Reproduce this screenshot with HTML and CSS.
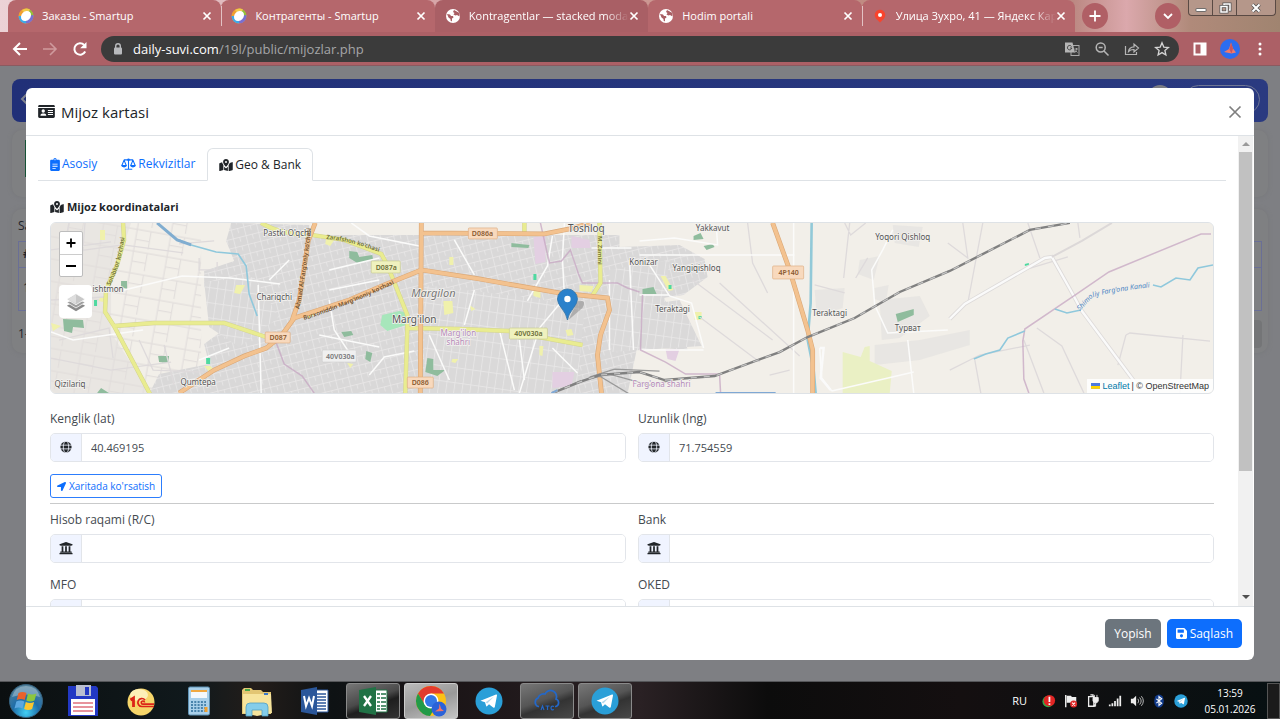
FILE: index.html
```html
<!DOCTYPE html>
<html lang="uz">
<head>
<meta charset="utf-8">
<title>Mijoz kartasi</title>
<link rel="stylesheet" href="styles.css">
</head>
<body>
<svg class="defs" aria-hidden="true">
  <defs>
    <symbol id="i-x" viewBox="0 0 10 10"><path d="M1.500 1.500l7 7M8.500 1.500l-7 7" fill="none" stroke="currentColor" stroke-width="1.700"/></symbol>
    <symbol id="i-smartup" viewBox="0 0 16 16">
      <circle cx="8" cy="8" r="7.500" fill="#f0a030"/>
      <path d="M8 .5A7.500 7.500 0 0 1 15.500 8L8 8z" fill="#8fc23c"/>
      <path d="M15.500 7A7.500 7.500 0 0 1 8 15.500L8 8z" fill="#7a6fd0"/>
      <path d="M8 15.500A7.500 7.500 0 0 1 .5 8L8 8z" fill="#3fa9e8"/>
      <path d="M4 2A7.500 7.500 0 0 1 12 1.500L8 8z" fill="#f3c94a"/>
      <ellipse cx="8" cy="8" rx="5.500" ry="4.500" transform="rotate(-45 8 8)" fill="#fff"/>
    </symbol>
    <symbol id="i-globe-fav" viewBox="0 0 16 16">
      <circle cx="8" cy="8" r="7" fill="#fff"/>
      <path d="M2 6l3 .5 1 1.500h2l.5 1.500-1.500 1v3l-1.500-1V11L3.500 9.500zM9 2l-1 2 1.500 1-1 1.500 2 1 1.500-.5 2.500 1.500V5z" fill="#a95f64"/>
    </symbol>
    <symbol id="i-book" viewBox="0 0 384 512"><path fill="currentColor" d="M336 64h-80a64 64 0 0 0-128 0H48C21 64 0 85 0 112v352c0 27 21 48 48 48h288c27 0 48-21 48-48V112c0-27-21-48-48-48zM192 40a24 24 0 1 1 0 48 24 24 0 0 1 0-48zM90 230h204v30H90zm0 80h204v30H90zm0 80h130v30H90z" fill-rule="evenodd"/></symbol>
    <symbol id="i-scale" viewBox="0 0 640 512"><path fill="none" stroke="currentColor" stroke-width="46" d="M120 80h400M320 40v425M160 480h320M130 90L40 310M130 90l90 220M510 90l-90 220M510 90l90 220"/><path fill="currentColor" d="M0 300h260q-15 100-130 100T0 300zM380 300h260q-15 100-130 100T380 300z"/><circle cx="320" cy="75" r="55" fill="currentColor"/></symbol>
    <symbol id="i-map" viewBox="0 0 576 512"><path fill="currentColor" fill-rule="evenodd" d="M288 0c70 0 126 56 126 126 0 56-80 158-113 198a17 17 0 0 1-26 0C242 284 162 182 162 126 162 56 218 0 288 0zm0 168a42 42 0 1 0 0-84 42 42 0 0 0 0 84zM10 180l110-40c8 40 26 76 56 120v212L32 508c-16 6-32-5-32-22V210c0-13-2-25 10-30zM208 330l56 56c13 15 35 15 48 0l56-56v182l-160-48zM400 260c20-30 38-60 48-90l96-36c16-6 32 5 32 22v294c0 13-8 25-20 30l-156 42z"/></symbol>
    <symbol id="i-card" viewBox="0 0 576 448"><path fill="currentColor" fill-rule="evenodd" d="M48 0h480c27 0 48 21 48 48v24H0V48C0 21 21 0 48 0zM0 100h576v300c0 27-21 48-48 48H48c-27 0-48-21-48-48zm176 50a58 58 0 1 0 0 116 58 58 0 0 0 0-116zM80 370h200c0-50-30-80-70-80h-60c-40 0-70 30-70 80zM336 170v36h176v-36zm0 70v36h176v-36zm0 70v36h176v-36z"/></symbol>
    <symbol id="i-globe" viewBox="0 0 16 16"><circle cx="8" cy="8" r="7.500" fill="currentColor"/><g fill="none" stroke="#f0f4ff" stroke-width="1.100"><ellipse cx="8" cy="8" rx="3.600" ry="8"/><path d="M0 5.500h16M0 10.500h16"/></g></symbol>
    <symbol id="i-bank" viewBox="0 0 512 512"><path fill="currentColor" d="M496 128v16a8 8 0 0 1-8 8h-24v12c0 6.627-5.373 12-12 12H60c-6.627 0-12-5.373-12-12v-12H24a8 8 0 0 1-8-8v-16a8 8 0 0 1 4.941-7.392l232-88a7.996 7.996 0 0 1 6.118 0l232 88A8 8 0 0 1 496 128zm-24 304H40c-13.255 0-24 10.745-24 24v16a8 8 0 0 0 8 8h464a8 8 0 0 0 8-8v-16c0-13.255-10.745-24-24-24zM96 192v192H60c-6.627 0-12 5.373-12 12v20h416v-20c0-6.627-5.373-12-12-12h-36V192h-64v192h-64V192h-64v192h-64V192H96z"/></symbol>
    <symbol id="i-arrow" viewBox="0 0 512 512"><path fill="currentColor" d="M444.520 3.520L28.740 195.420c-47.970 22.390-31.980 92.750 19.190 92.750h175.910v175.910c0 51.170 70.360 67.170 92.750 19.190l191.900-415.780c15.990-38.390-25.590-79.970-63.970-63.970z"/></symbol>
    <symbol id="i-save" viewBox="0 32 448 448"><path fill="currentColor" d="M433.941 129.941l-83.882-83.882A48 48 0 0 0 316.118 32H48C21.490 32 0 53.490 0 80v352c0 26.510 21.490 48 48 48h352c26.510 0 48-21.490 48-48V163.882a48 48 0 0 0-14.059-33.941zM224 416c-35.346 0-64-28.654-64-64 0-35.346 28.654-64 64-64s64 28.654 64 64c0 35.346-28.654 64-64 64zm96-304.520V212c0 6.627-5.373 12-12 12H76c-6.627 0-12-5.373-12-12V108c0-6.627 5.373-12 12-12h228.520c3.183 0 6.235 1.264 8.485 3.515l3.480 3.480A11.996 11.996 0 0 1 320 111.480z"/></symbol>
    <symbol id="i-telegram" viewBox="0 0 28 28"><circle cx="14" cy="14" r="13.500" fill="#2a9fd8"/><path d="M5.500 13.800L21 7.500q1.200-.4 1 1L19.800 20q-.4 1.200-1.600.4L14 17.300 12 19.300q-.6.5-.8-.3L10 15.300z" fill="#fff"/><path d="M10.500 15.200L19 9.500l-6.700 7z" fill="#b5d9ec"/></symbol>
  </defs>
</svg>

<header class="browser">
  <div class="strip">
    <div class="tabs">
      <div class="btab"><svg class="fav"><use href="#i-smartup"/></svg><span class="btab-text">Заказы - Smartup</span><button class="btab-x" aria-label="Close tab"><svg><use href="#i-x"/></svg></button></div>
      <div class="btab sep"><svg class="fav"><use href="#i-smartup"/></svg><span class="btab-text">Контрагенты - Smartup</span><button class="btab-x" aria-label="Close tab"><svg><use href="#i-x"/></svg></button></div>
      <div class="btab active"><svg class="fav"><use href="#i-globe-fav"/></svg><span class="btab-text fade">Kontragentlar — stacked moda</span><button class="btab-x" aria-label="Close tab"><svg><use href="#i-x"/></svg></button></div>
      <div class="btab"><svg class="fav"><use href="#i-globe-fav"/></svg><span class="btab-text">Hodim portali</span><button class="btab-x" aria-label="Close tab"><svg><use href="#i-x"/></svg></button></div>
      <div class="btab sep"><svg class="fav" viewBox="0 0 16 16"><path d="M8 14.500L4 10.500A5.300 5.300 0 1 1 12 10.500z" fill="#f8432d"/><circle cx="8" cy="7" r="2" fill="#fff"/></svg><span class="btab-text fade">Улица Зухро, 41 — Яндекс Кар</span><button class="btab-x" aria-label="Close tab"><svg><use href="#i-x"/></svg></button></div>
    </div>
    <button class="round" aria-label="New tab"><svg viewBox="0 0 12 12"><path d="M6 .5v11M.5 6h11" stroke="#fff" stroke-width="1.800"/></svg></button>
    <span class="grow"></span>
    <button class="round" aria-label="Search tabs"><svg viewBox="0 0 12 12"><path d="M2 4l4 4 4-4" fill="none" stroke="#fff" stroke-width="1.800"/></svg></button>
    <div class="winctl">
      <button aria-label="Minimize"><svg viewBox="0 0 14 12"><rect x="2" y="6.500" width="10" height="3" rx=".5" fill="#fff" stroke="#555" stroke-width=".8"/></svg></button>
      <button aria-label="Restore"><svg viewBox="0 0 14 12"><g fill="none" stroke="#555" stroke-width="3"><path d="M6 3V2h6v6h-1"/><rect x="3" y="4.500" width="6" height="5.500"/></g><g fill="none" stroke="#fff" stroke-width="1.500"><path d="M6 3V2h6v6h-1"/><rect x="3" y="4.500" width="6" height="5.500"/></g></svg></button>
      <button class="wide" aria-label="Close"><svg viewBox="0 0 14 12"><path d="M3.500 2.500l7 7M10.500 2.500l-7 7" stroke="#555" stroke-width="3.600"/><path d="M3.500 2.500l7 7M10.500 2.500l-7 7" stroke="#fff" stroke-width="2"/></svg></button>
    </div>
  </div>
  <div class="toolbar">
    <button class="tool" aria-label="Back"><svg viewBox="0 0 16 16"><path d="M15 8H2.500M8 2L2 8l6 6" fill="none" stroke="#fff" stroke-width="2"/></svg></button>
    <button class="tool" aria-label="Forward"><svg viewBox="0 0 16 16"><path d="M1 8h12.500M8 2l6 6-6 6" fill="none" stroke="#cf9a9d" stroke-width="1.600"/></svg></button>
    <button class="tool" aria-label="Reload"><svg viewBox="0 0 16 16"><path d="M13.200 10.500A5.700 5.700 0 1 1 12.200 4" fill="none" stroke="#fff" stroke-width="2"/><path d="M14.500 1v6.300H8.200z" fill="#fff"/></svg></button>
    <div class="omni">
      <svg class="lock" viewBox="0 0 12 14"><rect x="2" y="5.500" width="8" height="7" rx="1" fill="#b8babd"/><path d="M3.700 6V4a2.300 2.300 0 0 1 4.600 0v2" fill="none" stroke="#b8babd" stroke-width="1.400"/></svg>
      <span class="url"><b>daily-suvi.com</b>/19l/public/mijozlar.php</span>
      <button class="oi" aria-label="Translate"><svg viewBox="0 0 16 16"><rect x="7" y="4.500" width="8" height="10" fill="none" stroke="#a9a9a9"/><path d="M1 1.500h7.500l2.500 10H1z" fill="#b5b5b5"/><path d="M7.500 5.500A2.200 2.200 0 1 0 7.800 7H6" fill="none" stroke="#3b3b3b" stroke-width=".9"/><path d="M10.500 8h3.500M12.500 7v1.500l-1.500 3M12 10l1.500 1.500" fill="none" stroke="#b5b5b5" stroke-width=".8"/></svg></button>
      <button class="oi" aria-label="Zoom"><svg viewBox="0 0 16 16"><circle cx="6.700" cy="6.500" r="4.500" fill="none" stroke="#b5b5b5" stroke-width="1.500"/><path d="M10 10l4.500 4.500M4.700 6.500h4" stroke="#b5b5b5" stroke-width="1.500"/></svg></button>
      <button class="oi" aria-label="Share"><svg viewBox="0 0 16 16"><path d="M1.500 5v8.500h11V11M4.500 10.500q.5-4.500 5.500-4.700V3l4.500 4-4.500 4V8.500q-3.500-.2-5.500 2z" fill="none" stroke="#b5b5b5" stroke-width="1.200"/></svg></button>
      <button class="oi" aria-label="Bookmark"><svg viewBox="0 0 16 16"><path d="M8 1.800l1.800 4.300 4.600.4-3.500 3 1 4.500L8 11.600 4.100 14l1-4.500-3.500-3 4.600-.4z" fill="none" stroke="#d5d5d5" stroke-width="1.300"/></svg></button>
    </div>
    <button class="tool" aria-label="Side panel"><svg viewBox="0 0 16 16"><path fill-rule="evenodd" d="M1.500 1.500h13v13h-13zm2 2v9h5v-9z" fill="#fff"/></svg></button>
    <button class="tool" aria-label="Profile"><svg class="avatar" viewBox="0 0 20 20"><circle cx="10" cy="10" r="10" fill="#2b6df0"/><path d="M11 3.500l2 6 3 4-4.500 1-7.500-1.500 5-3z" fill="#f07a6a"/><path d="M11 3.500l2 6-1.500 5-2-4z" fill="#c95560"/></svg></button>
    <button class="tool" aria-label="Menu"><svg viewBox="0 0 16 16" fill="#fff"><circle cx="8" cy="3" r="1.500"/><circle cx="8" cy="8" r="1.500"/><circle cx="8" cy="13" r="1.500"/></svg></button>
  </div>
</header>

<main class="viewport">
  <div class="page" aria-hidden="true">
    <div class="bar"><svg viewBox="0 0 8 12"><path d="M7 1L2 6l5 5" fill="none" stroke="#80838f" stroke-width="2"/></svg><span class="grow"></span><i class="dot"></i><i class="pill"></i></div>
    <div class="panel filter"><i></i></div>
    <div class="panel list">
      <div class="row"><span>Sa</span></div>
      <div class="cells"><div class="cell head">#</div><div class="cell">1</div></div>
      <div class="row"><span>1–1</span><i class="pager"></i></div>
    </div>
  </div>

  <div class="overlay">
    <section class="modal" role="dialog" aria-labelledby="mtitle">
      <div class="mhead">
        <svg class="ic-card"><use href="#i-card"/></svg>
        <h5 id="mtitle">Mijoz kartasi</h5>
        <button class="close" aria-label="Close"><svg viewBox="0 0 14 14"><path d="M1.500 1.500l11 11M12.500 1.500l-11 11" stroke="#7f7f7f" stroke-width="1.700"/></svg></button>
      </div>
      <div class="mbody">
        <div class="content">
          <nav class="nav">
            <a href="#asosiy" class="link"><svg class="w10"><use href="#i-book"/></svg>Asosiy</a>
            <a href="#rekvizit" class="link"><svg class="w15"><use href="#i-scale"/></svg>Rekvizitlar</a>
            <a href="#geo" class="link current"><svg class="w14"><use href="#i-map"/></svg>Geo &amp; Bank</a>
          </nav>
          <div class="pane">
            <h6><svg class="w14"><use href="#i-map"/></svg>Mijoz koordinatalari</h6>
            <div class="map">
              <svg class="tiles" viewBox="52 223 1161 170" preserveAspectRatio="xMidYMid slice">
                <defs>
                  <pattern id="st" width="13" height="9" patternUnits="userSpaceOnUse" patternTransform="rotate(-14)"><rect width="13" height="9" fill="#d9d8d8"/><path d="M0 .5h13M.5 0v9M7 0v5" stroke="#e8e7e7" stroke-width=".8"/></pattern>
                  <pattern id="st2" width="8" height="15" patternUnits="userSpaceOnUse" patternTransform="rotate(8)"><rect width="8" height="15" fill="#dad9d9"/><path d="M0 .5h8M.5 0v15" stroke="#e9e8e8" stroke-width=".8"/></pattern>
                  <pattern id="rural" width="34" height="22" patternUnits="userSpaceOnUse" patternTransform="rotate(10)"><path d="M0 4h34M6 0v22M20 4v18M6 14h14" fill="none" stroke="#e2dedc" stroke-width="1.200"/></pattern>
                </defs>
                <rect x="0" y="200" width="1300" height="220" fill="#f2efe9"/>
                <path d="M52 223h80l-20 60 0 50 40 60H52z" fill="#e9e6e2"/>
                <rect x="52" y="223" width="150" height="170" fill="url(#rural)"/>
                <path d="M232 223l78 2 0 10 110 0 200 0 0 12 60-2 25 14 3 18-24 18-20 3 20 30 4 22-50-4-10 48-78 0H150l10-20 50-10-5-20 30-22-10-30-20-5 0-16 30-10-8-20z" fill="url(#st)"/>
                <path d="M425 285l115 14 45 10-8 84H425zM610 310l70-10 22 46-90 6zM205 282l50-5 25 40-40 30-30-20z" fill="url(#st2)"/>
                <path d="M610 270l60-10-8 60-52 20z" fill="url(#st2)"/>
                <g fill="#e4e2df"><path d="M893 225l30 2-4 20-24-4zM860 260l20-4-6 24-16-6zM875 288l14-3-3 18-11-4zM815 290l30-2-2 20-26 8zM875 345l45-5 50-10 0 15-50 15-45 5zM880 300l40-4 10 20-30 22-18 2z" opacity=".7"/></g>
                <!-- greens and parks -->
                <g fill="#8fbc9d"><path d="M64 319l20 1 1 8-11-1-1 6-8-2zM122 281l6 0 0 8-6-2zM159 356l11 0-1 7-9-1zM98 393l4-5 8 5zM350 251l8 1 2 5 13-2 1 5-16 3-8-5zM342 332l10-1 2 4-9 2zM367 351l6 2-2 9-5-3zM428 358l6 1 0 11 12 0-8 6-12-4zM512 243l8 1 10 1-1 3-17-1zM694 236l7-3 3 6-10 1zM704 246l9-2 2 3-8 3zM643 289l11-2 3 7-14 0zM896 314l18-5 0 6-16 7z"/></g>
                <path d="M383 315l17-4 9 2-2 12-19 6-7-6z" fill="#a7e6bb"/>
                <g fill="#f0f1ac"><path d="M101 230h5v10h-5zM237 285l9 0-5 9-6-1zM52 323l10 3-8 5zM101 297l5 0-2 5-4-1zM307 312l10 1-8 6zM327 237l8 3-4 6-5-2zM444 301l9 0 1 12-9 2zM450 257h4v8h-4zM534 290l7 0 0 8-7-2zM580 285l14 1-2 6-12-1zM566 330l6-1 2 6-6 1zM540 346l4 0-1 10-3-1zM661 276l5 0 8 14-5 1zM695 312l7 0 0 8-7 0zM470 305l6 4-4 2zM453 359l6 0-3 4-4-1zM205 366l6 0 5 4-5 3zM348 363l6 1-3 4z"/></g>
                <path d="M843 352l18 5 4-10 5-1 0 15 22 10-2 22-47 0z" fill="#eaf0c4"/>
                <g fill="#4fd9a0"><path d="M95 300h3v6h-3zM207 358h4v6h-4zM534 274h3v6h-3zM669 285l3 0 0 4-3 0zM699 316h3v3h-3zM1025 264l4-1 0 2-4 1z"/></g>
                <g fill="#e3cfe2"><path d="M534 237l12-1 0 26-10 2zM572 236l18 4 1 8-19 0zM553 372l22 0-3 14-19 2zM666 349l14 0-4 12-8-2z"/></g>
                <!-- minor streets -->
                <g fill="none" stroke="#dedadb" stroke-width="1.300">
                  <path d="M70 223l-6 30 60-8 60 8M86 223l-4 50M52 250l60-8M180 244l35-3M200 258v12h18v-8M52 300l54-3M60 340l50-12 4 30M52 358l60 12 60-8M140 340l14 30 50 2M165 345l10 40"/>
                  <path d="M748 223l5 40 15 30M693 280l80 60M720 283l80 73M700 317l60 45M770 375l20-5M845 223l6 12 15-12M850 223l-6 55M868 258l-12 20M963 223l5 35-20-15M983 223l-15 80M1126 335l4-2 80 8M1126 335l-8 30M1183 335l-3 58M1037 328l25 18 22 47M975 360l6 33M1024 340l20 53M1028 223l12 35M1078 223l2 15M1018 272l50-15M950 370l30-15 50-10M815 285l30 8"/>
                </g>
                <g fill="none" stroke="#fbfbfa" stroke-width="1.500">
                  <path d="M52 332l22 8 70-10M125 290l58-14 48 2 50 6M259 285l3 108M330 270l50-12M352 223l18 13 50 10M320 335l60 12M380 280l-50 10M430 335l20 45M370 375l15-18 30-6M553 236l-5 30-20 35M565 223l-2 35 2 40-25 30-20 65M553 348l25 25M592 248h40M640 241l35-3 43 7-1-15M640 255h155M794 223v170M650 265l20 31 22 7 12 45M640 350l64 0M640 295l30 0M893 230l-10 20-11 20 3 35 13 28 60-3M908 340l6 53M832 391l52-12 30-7M820 348l2 30 10 13"/>
                  <path d="M475 290l-10 35M500 330l15 60M455 240l20 35M520 340l5 40M330 300l5 30 20 30M200 360l30-12M290 260l-20 20M610 280v70M630 260l4 90"/>
                </g>
                <path d="M950 319l15-15 80-46 7-1 18 32 12 22 55 74" fill="none" stroke="#dddad9" stroke-width="4"/>
                <path d="M950 319l15-15 80-46 7-1 18 32 12 22 55 74M820 348l4 0-3 30 10 12" fill="none" stroke="#fafafa" stroke-width="2.400"/>
                <path d="M1052 257l30-16 30-18" fill="none" stroke="#dcd8d8" stroke-width="2"/>
                <!-- boundaries -->
                <g fill="none" stroke="#c5a6c2" stroke-width="1.500" opacity=".75"><path d="M541 223l4 18 5 22 12-2 9-11 8 24 4 9h35l10 5 12 4M643 295l-2 55 25 12 20 12 34 0 1 19M276 340l9 24 18 12 12 17M1211 234l-10 0-92 38-35 24-49 33-2 12 1 38 5 14"/></g>
                <!-- water -->
                <g fill="none" stroke="#8fc8dc" stroke-width="1.600"><path d="M180 240l12 5 25 7 22 2 8 12 3 28 8 22M974 359l12-5 14-4 8-12 17-7M1055 309l12 4 14-3M1153 285l8 2 15-9 14 2 8-12 15-3"/></g>
                <path d="M158 223l20 17 14 5" fill="none" stroke="#80add0" stroke-width="3"/>
                <path d="M812 223l-1 80-3 37 6 30 2 23" fill="none" stroke="#92c9d8" stroke-width="2.600"/>
                <!-- secondary roads -->
                <g fill="none" stroke="#d3d48f" stroke-width="4.400"><path d="M124 223l1 17-7 25-11 25-1 22 9 14 36 68M115 326l40-3 70 0 42 14M262 223q20 12 50 12l33 5 37 14 6 11 20 50v13l-2 65M408 328l52 1 50 2 35 7 38 7M600 223l1 60-9 14M525 223l0 10"/></g>
                <g fill="none" stroke="#e9ec90" stroke-width="3.400"><path d="M124 223l1 17-7 25-11 25-1 22 9 14 36 68M115 326l40-3 70 0 42 14M262 223q20 12 50 12l33 5 37 14 6 11 20 50v13l-2 65M408 328l52 1 50 2 35 7 38 7M600 223l1 60-9 14M525 223l0 10"/></g>
                <!-- primary roads -->
                <g fill="none" stroke="#dba877" stroke-width="4.800"><path d="M422 223l-1 170M422 233l123 1 25-5 22-6M180 393l35-23 30-14 22-8 15-12 13-18 55-18 35-15 37-15 58 9 80 14 48 5 2 12-9 25-3 20 4 38M316 223l-7 18-9 59-7 20M773 223l17 47 18 60 5 20 0 43"/></g>
                <g fill="none" stroke="#f3c28f" stroke-width="3.600"><path d="M422 223l-1 170M422 233l123 1 25-5 22-6M180 393l35-23 30-14 22-8 15-12 13-18 55-18 35-15 37-15 58 9 80 14 48 5 2 12-9 25-3 20 4 38M316 223l-7 18-9 59-7 20M773 223l17 47 18 60 5 20 0 43"/></g>
                <!-- railway -->
                <g fill="none"><path d="M553 393l27-12 30-7 40 11 28-6M590 377l25-8 45 2M600 376l30 18" stroke="#999" stroke-width="1.300"/>
                <path d="M553 393l27-11 20-7 40-3 25 8 50-4 65-24 28-15 47-19 45-26 50-21 80-41 40-7" stroke="#808080" stroke-width="2.400"/><path d="M553 393l27-11 20-7 40-3 25 8 50-4 65-24 28-15 47-19 45-26 50-21 80-41 40-7" stroke="#c5c5c5" stroke-width="1.200" stroke-dasharray="6 7"/></g>
                <path d="M552 393l6-3M716 393h60" stroke="#7fa8d4" stroke-width="2"/>
                <!-- shields -->
                <g class="shield or"><rect x="469" y="228" width="29" height="11" rx="1"/><text x="483" y="236">D086a</text><rect x="266" y="332" width="25" height="11" rx="1"/><text x="279" y="340">D087</text><rect x="408" y="377" width="26" height="11" rx="1"/><text x="421" y="385">D086</text><rect x="773" y="266" width="31" height="13" rx="1"/><text x="789" y="275">4P140</text></g>
                <g class="shield ye"><rect x="372" y="261" width="29" height="12" rx="1"/><text x="387" y="270">D087a</text><rect x="510" y="328" width="38" height="11" rx="1"/><text x="529" y="336">40V030a</text></g>
                <g class="shield gr"><rect x="323" y="350" width="34" height="12" rx="1"/><text x="341" y="359">40V030a</text></g>
                <!-- place names -->
                <g class="place"><text x="288" y="236">Pastki O'qchi</text><text x="109" y="292">ishtmon</text><text x="275" y="300">Chariqchi</text><text x="71" y="387">Qizilariq</text><text x="199" y="385">Qumtepa</text><text x="644" y="265">Konizar</text><text x="697" y="271">Yangiqishloq</text><text x="673" y="312">Teraktagi</text><text x="830" y="316">Teraktagi</text><text x="713" y="231">Yakkavut</text><text x="903" y="240">Yoqori Qishloq</text><text x="908" y="331">Турват</text></g>
                <g class="place big"><text x="587" y="232">Toshloq</text><text x="415" y="323">Marg'ilon</text><text x="434" y="297" class="it">Margilon</text></g>
                <g class="place vio"><text x="459" y="336">Marg'ilon</text><text x="459" y="345">shahri</text><text x="662" y="387">Farg'ona shahri</text></g>
                <path id="canal" d="M1080 311l12-13q14-7 100-15" fill="none"/><text class="wtext"><textPath href="#canal">Shimoliy Farg'ona Kanali</textPath></text>
                <path id="r1" d="M305 320q42-13 100-41" fill="none"/><text class="rtext"><textPath href="#r1">Burxoniddin Marg'inoniy ko'chasi</textPath></text>
                <path id="r2" d="M300 309q6-30 12-82" fill="none"/><text class="rtext"><textPath href="#r2">Ahmad Al-Farg'oniy ko'chasi</textPath></text>
                <path id="r3" d="M111 286q12-22 16-60" fill="none"/><text class="rtext ol"><textPath href="#r3">Sohibkor ko'chasi</textPath></text>
                <path id="r4" d="M327 239q28 2 70 20" fill="none"/><text class="rtext ol"><textPath href="#r4">Zarafshon ko'chasi</textPath></text>
                <path id="r5" d="M599 236v50" fill="none"/><text class="rtext ol"><textPath href="#r5">M. Zamini</textPath></text>
                <!-- marker -->
                <path d="M569 320l14-12q5-9-5-7z" fill="#000" opacity=".2"/>
                <path d="M568 320q-1-6-6-12-4-5-4-9a9.500 9.500 0 0 1 20 0q0 4-4 9-5 6-6 12z" fill="#2a81cb" stroke="#3272a5" stroke-width=".8"/><circle cx="568" cy="299" r="3.200" fill="#fff"/>
              </svg>
              <div class="mctl">
                <div class="zoom"><button aria-label="Zoom in"><svg viewBox="0 0 12 12"><path d="M6 1.500v9M1.500 6h9" stroke="#000" stroke-width="1.800"/></svg></button><button aria-label="Zoom out"><svg viewBox="0 0 12 12"><path d="M1 6h10" stroke="#000" stroke-width="1.800"/></svg></button></div>
                <button class="layers" aria-label="Layers"><svg viewBox="0 0 24 24"><path d="M2 16l10-5 10 5-10 6z" fill="#8a8a8a"/><path d="M2 12.500l10-5 10 5-10 6z" fill="#a0a0a0" stroke="#fff" stroke-width=".8"/><path d="M2 9l10-6 10 6-10 6z" fill="#c8c8c8" stroke="#fff" stroke-width=".8"/><path d="M3 9l9-5.500V14z" fill="#dedede"/></svg></button>
              </div>
              <div class="attr"><svg viewBox="0 0 12 8"><path fill="#4c7be1" d="M0 0h12v4H0z"/><path fill="#ffd500" d="M0 4h12v3H0z"/><path fill="#e0bc00" d="M0 7h12v1H0z"/></svg><a href="#leaflet">Leaflet</a> | © OpenStreetMap</div>
            </div>
            <div class="grid">
              <div class="field"><label for="lat">Kenglik (lat)</label><div class="group"><span><svg><use href="#i-globe"/></svg></span><input id="lat" value="40.469195"></div></div>
              <div class="field"><label for="lng">Uzunlik (lng)</label><div class="group"><span><svg><use href="#i-globe"/></svg></span><input id="lng" value="71.754559"></div></div>
            </div>
            <button class="outline"><svg><use href="#i-arrow"/></svg>Xaritada ko'rsatish</button>
            <hr>
            <div class="grid last">
              <div class="field"><label for="rc">Hisob raqami (R/C)</label><div class="group"><span><svg class="bank"><use href="#i-bank"/></svg></span><input id="rc"></div></div>
              <div class="field"><label for="bank">Bank</label><div class="group"><span><svg class="bank"><use href="#i-bank"/></svg></span><input id="bank"></div></div>
              <div class="field"><label for="mfo">MFO</label><div class="group"><span></span><input id="mfo"></div></div>
              <div class="field"><label for="oked">OKED</label><div class="group"><span></span><input id="oked"></div></div>
            </div>
          </div>
        </div>
        <div class="scroll" aria-hidden="true"><svg viewBox="0 0 8 8"><path d="M0 6l4-4 4 4z" fill="#9a9a9a"/></svg><div class="track"><i></i></div><svg viewBox="0 0 8 8"><path d="M0 2l4 4 4-4z" fill="#4f4f4f"/></svg></div>
      </div>
      <div class="mfoot"><button class="btn gray">Yopish</button><button class="btn blue"><svg><use href="#i-save"/></svg>Saqlash</button></div>
    </section>
  </div>
</main>

<footer class="taskbar">
  <button class="app start" aria-label="Start"><svg viewBox="0 0 36 34"><defs><radialGradient id="orb" cx=".5" cy=".85" r=".9"><stop offset="0" stop-color="#42d0f5"/><stop offset=".45" stop-color="#1f6da8"/><stop offset="1" stop-color="#5d8699"/></radialGradient></defs><circle cx="18" cy="17" r="16.500" fill="url(#orb)" stroke="#35607c"/><path d="M4 13q3-11 14-11t14 11q-14-5-28 0z" fill="#fff" opacity=".3"/><path d="M10.500 9q4-2 8 0l-1.800 7q-4-2-8 0z" fill="#e8622c"/><path d="M20 9.500q4 2 8.500 0l-2 7q-4 2-8.200 0z" fill="#8cc63e"/><path d="M8.300 17.500q4-2 8 0l-1.800 7q-4-2-8 0z" fill="#5ba7e0"/><path d="M17.800 18q4 2 8.300 0l-2 7q-4 2-8 0z" fill="#fbc62e"/></svg></button>
  <button class="app" aria-label="Floppy"><svg viewBox="0 0 32 32"><path d="M1 1h28l2 2v28H1z" fill="#2238c4"/><path d="M9 0h15v11H9z" fill="#b9bed0"/><path d="M18 2h4v8h-4z" fill="#2238c4"/><path d="M4 14h24v16H4z" fill="#fff"/><path d="M6 18h20M6 22h20M6 26h20" stroke="#d0283a" stroke-width="1.200"/></svg></button>
  <button class="app" aria-label="1C"><svg viewBox="0 0 32 32"><circle cx="16" cy="17" r="13.500" fill="#f6d66a"/><ellipse cx="14" cy="10" rx="9" ry="6" fill="#fdf0b8"/><path d="M5.500 15l3-2v9" fill="none" stroke="#dc2418" stroke-width="2.800"/><path d="M20 15a4 4 0 1 0-3 6.500H29M19.500 17.500a1.600 1.600 0 1 0-1.500 1.700H29" fill="none" stroke="#dc2418" stroke-width="1.700"/></svg></button>
  <button class="app" aria-label="Calculator"><svg viewBox="0 0 32 32"><rect x="5.500" y="2" width="21" height="28" rx="1.500" fill="#a9d0ea" stroke="#5f93b5"/><rect x="8" y="5" width="16" height="8" fill="#f4f8fb"/><path d="M8 5h16v2H8z" fill="#f0a840"/><path d="M8 17h15M8 20h15M8 23h15M8 26h15" stroke="#4883ac" stroke-width="2" stroke-dasharray="2 1.300"/><path d="M21.500 22h3v5h-3z" fill="#f0a030"/></svg></button>
  <button class="app" aria-label="Explorer"><svg viewBox="0 0 32 32"><path d="M1 5l2-2h7l2 2h8l2 2h8v22H1z" fill="#e3c673"/><path d="M2 9h28l1 19-15 3-14-3z" fill="#f7e49c"/><path d="M4 4h5v2H4zM13 6h5" fill="#48a848"/><path d="M23 8h4v2h-4z" fill="#3c78c8"/><path d="M5 31V22q0-4 4-4h14q4 0 4 4v9h-6v-6H11v6z" fill="#84cdea" stroke="#539fc0" stroke-width=".8"/></svg></button>
  <button class="app" aria-label="Word"><svg viewBox="0 0 32 32"><path d="M15 5h14v22H15z" fill="#fff" stroke="#2b579a"/><path d="M18 9h9M18 12h9M18 15h9M18 18h9M18 21h9M18 24h9" stroke="#2b579a" stroke-width="1.300"/><path d="M2 5l16-3v28L2 27z" fill="#2b579a"/><path d="M5 11l2 10 3-8 3 8 2-10" fill="none" stroke="#fff" stroke-width="2"/></svg></button>
  <button class="app open" aria-label="Excel"><svg viewBox="0 0 32 32"><path d="M17 5h13v22H17z" fill="#fff" stroke="#207245"/><path d="M20 9h3m1 0h5M20 13h3m1 0h5M20 17h3m1 0h5M20 21h3m1 0h5M20 24h3m1 0h5" stroke="#207245" stroke-width="1.700"/><path d="M2 5l17-3v28L2 27z" fill="#207245"/><path d="M7 11l7 10M14 11L7 21" fill="none" stroke="#fff" stroke-width="2.300"/></svg></button>
  <button class="app open lit" aria-label="Chrome"><svg viewBox="0 0 32 32"><circle cx="16" cy="16" r="15" fill="#fbc116"/><path d="M3 8.500A15 15 0 0 1 29 8.500H16l-6.500 11z" fill="#e33b2e"/><path d="M3 8.500A15 15 0 0 0 15 31l7-12H9.500z" fill="#229a48"/><circle cx="16" cy="16" r="7.500" fill="#fff"/><circle cx="16" cy="16" r="6" fill="#3478e5"/><circle cx="24" cy="24" r="7.500" fill="#2b62d8"/><path d="M24.500 18.500l1.500 5 3 2.500-9 .5 4-3z" fill="#ef7468"/></svg></button>
  <button class="app" aria-label="Telegram"><svg class="tg"><use href="#i-telegram"/></svg></button>
  <button class="app open dim" aria-label="ATC"><svg viewBox="0 0 32 32"><path d="M8 21.500H7.500A4.500 4.500 0 0 1 7 13a6 6 0 0 1 7-4 6 6 0 0 1 11 5 4 4 0 0 1 0 7.500h-1" fill="none" stroke="#2468c8" stroke-width="1.700"/><path d="M10 25l1.500-4 1.500 4M14.500 21h4m-2 0v4M23 21.500q-3-1-3 1.500t3 1.500" fill="none" stroke="#2468c8" stroke-width="1.200"/></svg></button>
  <button class="app open dim" aria-label="Telegram window"><svg class="tg"><use href="#i-telegram"/></svg></button>
  <span class="grow"></span>
  <span class="lang">RU</span>
  <div class="tray">
    <svg viewBox="0 0 16 16"><circle cx="7" cy="8.500" r="6.500" fill="#35a548"/><circle cx="8.500" cy="7.500" r="6.500" fill="#e02524"/><path d="M8.500 3v6M8.500 10.500v2" stroke="#fff" stroke-width="2"/></svg>
    <svg viewBox="0 0 16 16"><path d="M2 1v14" stroke="#fff" stroke-width="1.500"/><path d="M3 2h5l1 1.500h5V10H3z" fill="#eee"/><circle cx="11" cy="11.500" r="4" fill="#e02a2a"/><path d="M9.300 9.800l3.400 3.400M12.700 9.800l-3.400 3.400" stroke="#fff" stroke-width="1.200"/></svg>
    <svg viewBox="0 0 16 16"><path d="M3 3h6v11H3zM5 1h3v2" fill="none" stroke="#eee" stroke-width="1.500"/><path d="M8 4h6v4l-1.500 2H9.500L8 8zM9.500 1v3M12.500 1v3M11 10v4H8" fill="#eee" stroke="#eee"/></svg>
    <svg viewBox="0 0 16 16" fill="#eee"><path d="M1 12h2v2H1zM4 10.500h2V14H4zM7 8h2v6H7zM10 5h2v9h-2zM13 2h2v12h-2z"/></svg>
    <svg viewBox="0 0 16 16"><path d="M1 5.500h2.500L7 2v12l-3.500-3.500H1z" fill="#eee"/><path d="M9 5.500q2 2.500 0 5M11 4q3.500 4 0 8M13 2.500q4.500 5.500 0 11" fill="none" stroke="#ccc"/></svg>
    <svg viewBox="0 0 16 16"><ellipse cx="8" cy="8" rx="5.500" ry="7.500" fill="#123c8c"/><path d="M5 5.500l6 5-3 2.500V3l3 2.500-6 5" fill="none" stroke="#fff" stroke-width="1.300"/></svg>
    <svg viewBox="0 0 28 28"><use href="#i-telegram"/></svg>
  </div>
  <div class="clock"><span>13:59</span><span>05.01.2026</span></div>
  <button class="desk" aria-label="Show desktop"></button>
</footer>
</body>
</html>
```
FILE: styles.css
```css
* { box-sizing: border-box; }
html, body { height: 100%; margin: 0; }
body {
  display: flex;
  flex-direction: column;
  overflow: hidden;
  font-family: "Open Sans", "Noto Sans", sans-serif;
  font-size: 12px;
  line-height: 18px;
  color: #212529;
}
button { font: inherit; border: 0; padding: 0; background: none; color: inherit; }
svg { display: block; flex: none; }
.defs { position: absolute; width: 0; height: 0; }
.grow { flex: 1; }

/* browser frame */
.strip {
  display: flex;
  align-items: center;
  height: 32px;
  padding-left: 8px;
  background: linear-gradient(90deg, #ecd2d6, #d9a9ad 30%, #c68f86 60%, #b5827a 83%, #dba8ac 88%, #b08a7a 93%, #a08470);
}
.tabs { display: flex; flex: 0 1 1067px; min-width: 0; height: 100%; }
.btab {
  position: relative;
  display: flex;
  align-items: center;
  flex: 1;
  min-width: 0;
  padding: 0 9px 0 10px;
  background: #b5676c;
  border-radius: 8px 8px 0 0;
  color: #fff;
  font-size: 11px;
}
.btab.active { background: #a95f65; }
.btab.sep::before { content: ""; position: absolute; left: 0; top: 6px; width: 1px; height: 20px; background: #e3c2c4; }
.fav { width: 16px; height: 16px; margin-right: 8px; }
.btab-text { flex: 1; min-width: 0; overflow: hidden; white-space: nowrap; }
.btab-text.fade { -webkit-mask-image: linear-gradient(90deg, #000 85%, transparent); mask-image: linear-gradient(90deg, #000 85%, transparent); }
.btab-x svg { width: 10px; height: 10px; }
.round { display: grid; place-items: center; width: 26px; height: 26px; margin-left: 7px; border-radius: 50%; background: #b05f65; }
.round svg { width: 12px; height: 12px; }
.winctl { display: flex; align-self: flex-start; height: 16px; margin: 0 4px 0 7px; border: 1px solid #5a4a44; border-top: 0; border-radius: 0 0 4px 4px; background: #b5978a; }
.winctl button { width: 24px; display: grid; place-items: center; border-right: 1px solid #5a4a44; }
.winctl .wide { width: 38px; border-right: 0; }
.winctl svg { width: 14px; height: 12px; }
.toolbar { display: flex; align-items: center; height: 34px; padding: 0 5px; background: #ac6066; border-bottom: 1px solid #8b5a60; }
.tool { display: grid; place-items: center; width: 30px; height: 30px; }
.tool svg { width: 16px; height: 16px; }
.tool .avatar { width: 20px; height: 20px; }
.omni { display: flex; align-items: center; flex: 1; height: 26px; margin: 0 6px; padding: 0 2px 0 11px; border-radius: 13px; background: #3b3b3b; }
.lock { width: 12px; height: 14px; margin-right: 9px; }
.url { flex: 1; color: #a5a6a8; font-size: 13px; }
.url b { font-weight: 400; color: #fff; }
.oi { display: grid; place-items: center; width: 30px; height: 26px; }
.oi svg { width: 16px; height: 16px; }

/* dimmed page and dialog share one grid cell */
.viewport { display: grid; flex: 1; min-height: 0; grid-template: minmax(0, 1fr) / minmax(0, 1fr); background: #7e7f83; }
.page, .overlay { grid-area: 1 / 1; min-height: 0; }
.page { padding: 13px 12px; color: #23242a; }
.bar { display: flex; align-items: flex-start; height: 43px; padding: 6px 8px; border-radius: 8px; background: linear-gradient(90deg, #213078, #2a3a80); }
.bar > svg { width: 8px; height: 12px; margin-top: 8px; }
.dot { width: 24px; height: 24px; margin-right: 12px; border-radius: 50%; background: #7c7d83; }
.pill { width: 76px; height: 29px; border: 1px solid #6f7694; border-radius: 15px; }
.panel { margin-top: 8px; border-radius: 10px; background: #7f8082; box-shadow: 0 0 4px #77787a; }
.filter { height: 67px; padding: 10px 13px; }
.filter i { display: block; width: 40px; height: 37px; background: #155235; }
.list { margin-top: 12px; padding: 6px; height: 144px; }
.row { display: flex; justify-content: space-between; align-items: center; height: 22px; }
.cells { margin: 4px 0 12px; border: 1px solid #6a6f96; }
.cell { height: 42px; padding: 11px 4px; }
.cell.head { height: 26px; padding: 3px 4px; font-weight: 700; border-bottom: 1px solid #6a6f96; }
.pager { width: 30px; height: 28px; border-radius: 4px; background: #747577; }

.overlay { display: flex; padding: 22px 26px 21px; }
.modal { display: flex; flex: 1; flex-direction: column; min-width: 0; border-radius: 6px; background: #fff; overflow: hidden; }
.mhead { display: flex; align-items: center; height: 48px; padding: 0 12px; gap: 6px; border-bottom: 1px solid #dee2e6; }
.ic-card { width: 17px; height: 13px; }
.mhead h5 { flex: 1; margin: 0; font-size: 15px; font-weight: 400; }
.close svg { width: 14px; height: 14px; }
.mbody { display: flex; flex: 1; min-height: 0; }
.content { flex: 1; min-width: 0; padding: 12px; overflow: hidden; }
.nav { display: flex; border-bottom: 1px solid #dee2e6; }
.link { display: flex; align-items: center; gap: 2px; height: 32px; padding: 0 11px; margin-bottom: -1px; border: 1px solid transparent; border-radius: 6px 6px 0 0; color: #0d6efd; text-decoration: none; }
.link.current { height: 33px; color: #212529; border-color: #dee2e6 #dee2e6 #fff; background: #fff; }
.w10 { width: 10px; height: 13px; }
.w15 { width: 15px; height: 12px; }
.w14 { width: 14px; height: 12px; }
.pane { padding: 17px 12px 0; }
.pane h6 { display: flex; align-items: center; gap: 3px; margin: 0 0 6px; font-size: 11px; line-height: 18px; font-weight: 700; }
.map { position: relative; height: 172px; border: 1px solid #dee2e6; border-radius: 6px; overflow: hidden; background: #f2efe9; }
.tiles { width: 100%; height: 100%; }
.shield text { font: 600 7px "Noto Sans", sans-serif; text-anchor: middle; }
.or rect { fill: #f8d9bd; stroke: #dca878; stroke-width: .6; }
.or text { fill: #8a5a30; }
.ye rect { fill: #eff1be; stroke: #c5c88a; stroke-width: .6; }
.ye text { fill: #6a6c38; }
.gr rect { fill: #f0f0f0; stroke: #ccc; stroke-width: .6; }
.gr text { fill: #777; }
.place text { font: 8px "Noto Sans", sans-serif; fill: #555; text-anchor: middle; stroke: #f4f3f0; stroke-width: 1.5px; paint-order: stroke; }
.place.big text { font-size: 10px; }
.place.big .it { font-size: 11px; font-style: italic; fill: #777; }
.place.vio text { fill: #b48ab8; }
.wtext { font: italic 7px "Noto Sans", sans-serif; fill: #4d86c4; }
.rtext { font: 600 6px "Noto Sans", sans-serif; fill: #6e4f2c; }
.rtext.ol { fill: #6f6f38; }
.mctl { position: absolute; left: 8px; top: 8px; display: flex; flex-direction: column; align-items: flex-start; gap: 8px; }
.zoom { border: 1px solid #bdbdbd; border-radius: 2px; background: #fff; }
.zoom button { display: grid; place-items: center; width: 22px; height: 22px; }
.zoom button + button { border-top: 1px solid #ccc; }
.zoom svg { width: 12px; height: 12px; }
.layers { display: grid; place-items: center; width: 33px; height: 33px; border-radius: 4px; background: #fff; }
.layers svg { width: 22px; height: 22px; }
.attr { position: absolute; right: 0; bottom: 0; display: flex; align-items: center; gap: 2px; padding: 0 4px; font: 9px/14px "Liberation Sans", Arial, sans-serif; background: rgba(255, 255, 255, .85); color: #333; }
.attr svg { width: 9px; height: 6px; }
.attr a { color: #0078a8; text-decoration: none; }
.grid { display: grid; grid-template-columns: 1fr 1fr; gap: 12px; margin-top: 15px; }
.grid.last { margin-top: 6px; }
.field label { display: block; margin-bottom: 4px; line-height: 20px; color: #444a50; }
.group { display: flex; height: 29px; border: 1px solid #e2e5ea; border-radius: 5px; overflow: hidden; }
.group span { display: grid; place-items: center; width: 31px; padding-bottom: 2px; border-right: 1px solid #e2e5ea; background: #f0f4ff; }
.group svg { width: 12px; height: 12px; }
.group .bank { width: 14px; height: 14px; }
.group input { flex: 1; min-width: 0; padding: 0 9px; border: 0; outline: 0; font: inherit; font-size: 11px; color: #444a50; background: #fff; }
.outline { display: flex; align-items: center; gap: 3px; height: 24px; margin-top: 12px; padding: 0 6px; border: 1px solid #2c7dfd; border-radius: 3px; color: #0d6efd; font-size: 10px; }
.outline svg { width: 9px; height: 9px; }
hr { margin: 5px 0 0; border: 0; border-top: 1px solid #c9cacb; }
.scroll { display: flex; flex-direction: column; align-items: center; width: 15px; margin-right: 1px; padding: 4px 0 5px; gap: 4px; background: #f1f1f1; }
.scroll svg { width: 8px; height: 8px; }
.track { flex: 1; align-self: stretch; padding: 0 1px; }
.track i { display: block; height: 73%; background: #c1c1c1; }
.mfoot { display: flex; align-items: center; justify-content: flex-end; gap: 6px; height: 54px; padding: 0 12px; border-top: 1px solid #dee2e6; }
.btn { display: flex; align-items: center; gap: 3px; height: 29px; padding: 0 9px; border-radius: 5px; color: #fff; }
.btn svg { width: 11px; height: 11px; }
.gray { background: #6c757d; }
.blue { background: #0d6efd; }

/* taskbar */
.taskbar { display: flex; align-items: center; height: 38px; border-top: 1px solid #555659; background: linear-gradient(90deg, #0b0f10, #10191c 15%, #231d1a 20%, #0e1214 26%, #1a1416 34%, #2a2124 50%, #0c0c0c 60%, #140f10 75%, #071012); color: #fff; }
.app { display: grid; place-items: center; width: 54px; height: 36px; margin-right: 4px; }
.app.start { width: 52px; }
.app svg { width: 32px; height: 32px; }
.app.start svg { width: 36px; height: 34px; }
.app .tg { width: 28px; height: 28px; }
.app.open { border: 1px solid #8a8a8a; border-radius: 3px; background: linear-gradient(160deg, #777 0, #4a4a4a 45%, #1e1e1e 60%, #333); }
.app.lit { background: linear-gradient(160deg, #bbb, #999 50%, #c5c5c5); border-color: #ccc; }
.app.dim { background: linear-gradient(160deg, #777 0, #555 45%, #333 60%, #484848); }
.lang { font-size: 11px; margin-right: 15px; }
.tray { display: flex; gap: 8px; margin-right: 5px; }
.tray svg { width: 14px; height: 16px; }
.clock { display: flex; flex-direction: column; align-items: center; width: 74px; font-size: 10px; line-height: 16px; }
.desk { width: 13px; height: 36px; border: 1px solid #555; background: #1b1b1b; }
```
